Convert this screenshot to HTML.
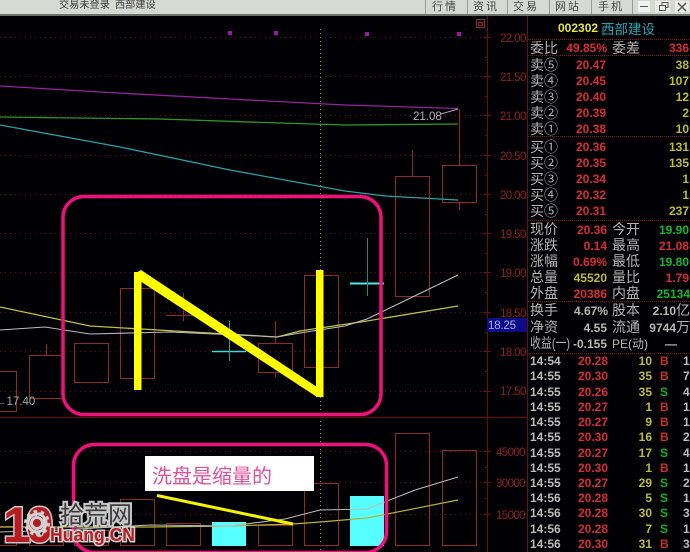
<!DOCTYPE html>
<html><head><meta charset="utf-8">
<style>
html,body{margin:0;padding:0;background:#000;width:690px;height:552px;overflow:hidden}
svg{display:block}
text{font-family:"Liberation Sans","Noto Sans CJK SC",sans-serif}
.ax{fill:#8c2226;font-size:11.5px;letter-spacing:-.6px}
.l{fill:#b4b4b4;font-size:14px;font-family:"Liberation Sans","WenQuanYi Zen Hei","Noto Sans CJK SC",sans-serif}
.r{fill:#d82c38;font-size:12px;font-weight:bold;text-anchor:end}
.y{fill:#bcbc38;font-size:12px;font-weight:bold;text-anchor:end}
.g{fill:#12b82c;font-size:12px;font-weight:bold;text-anchor:end}
.w{fill:#b8b8b8;font-size:12px;font-weight:bold;text-anchor:end}
.t{fill:#bcbcbc;font-size:12px;font-weight:bold}
.b{fill:#c83030;font-size:12px;font-weight:bold}
.s{fill:#12b02c;font-size:12px;font-weight:bold}
.m{fill:#444;font-size:11px;letter-spacing:2px}
.c rect,.c path{fill:none;stroke:#8e2a2c;stroke-width:1}
</style></head><body>
<svg width="690" height="552" viewBox="0 0 690 552" xmlns="http://www.w3.org/2000/svg">
<rect width="690" height="552" fill="#000004"/>
<!-- title bar -->
<rect width="690" height="15" fill="#d6d8d2"/>
<rect y="14" width="690" height="2" fill="#6e6e6a"/>
<text x="59" y="8" fill="#3c3c3c" font-size="10.200">交易未登录</text>
<text x="115" y="8" fill="#3c3c3c" font-size="10.200">西部建设</text>
<g stroke="#9a9a96"><path d="M425.500 0V14M467.500 0V14M507.500 0V14M549.500 0V14M591.500 0V14M632.500 0V14"/></g>
<text x="432" y="10" class="m">行情</text><text x="473" y="10" class="m">资讯</text><text x="513" y="10" class="m">交易</text><text x="555" y="10" class="m">网站</text><text x="598" y="10" class="m">手机</text>
<rect x="638" y="1" width="12" height="11" fill="#f0f0ee"/><path d="M640 6.500H648" stroke="#555"/>
<rect x="655" y="1" width="15" height="11" fill="#ecece8"/><path d="M659.500 5.500h6v5h-6zM662 5V2.500h6v5h-2" fill="none" stroke="#555"/>
<rect x="675" y="1" width="14" height="11" fill="#ecece8"/><path d="M678 3L686 11M686 3L678 11" stroke="#555" stroke-width="1.500"/>
<!-- grid -->
<g stroke="#6a0c0c" stroke-dasharray="1 4" fill="none">
<path d="M0 37.500H487M0 76.500H487M0 115.500H487M0 155.500H487M0 194.500H487M0 233.500H487M0 272.500H487M0 312.500H487M0 351.500H487M0 391.500H487M0 451.500H487M0 482.500H487M0 514.500H487"/>
</g>
<path d="M320.500 29V552" stroke="#8a8a60" stroke-dasharray="1 3"/>
<!-- axes -->
<g stroke="#6e0c10" fill="none">
<path d="M487.500 16V552M527.500 16V552M0 417.500H527"/>
<path d="M483 37.500h8M483 76.500h8M483 115.500h8M483 155.500h8M483 194.500h8M483 233.500h8M483 272.500h8M483 312.500h8M483 351.500h8M483 391.500h8M483 451.500h8M483 482.500h8M483 514.500h8"/>
<path d="M485 57.500h3M485 96.500h3M485 135.500h3M485 175.500h3M485 214.500h3M485 253.500h3M485 292.500h3M485 332.500h3M485 371.500h3M485 467.500h3M485 498.500h3"/>
<path d="M476.500 19.500h8v8h-8zM478.500 22.500h4v3h-4z" stroke="#8e2a2c"/>
</g>
<g>
<text x="500" y="42" class="ax">22.00</text><text x="500" y="81" class="ax">21.50</text><text x="500" y="120" class="ax">21.00</text><text x="500" y="160" class="ax">20.50</text><text x="500" y="199" class="ax">20.00</text><text x="500" y="238" class="ax">19.50</text><text x="500" y="277" class="ax">19.00</text><text x="500" y="317" class="ax">18.50</text><text x="500" y="356" class="ax">18.00</text><text x="500" y="395" class="ax">17.50</text>
<text x="496" y="456" class="ax">45000</text><text x="496" y="487" class="ax">30000</text><text x="496" y="519" class="ax">15000</text>
</g>
<rect x="487" y="318" width="40" height="14" fill="#0c0c88"/>
<text x="488" y="329" fill="#a8a8ee" font-size="11.500" letter-spacing="-.2">18.25</text>
<!-- candles -->
<g class="c">
<rect x="-2.500" y="371.500" width="19" height="40"/>
<rect x="29.500" y="355.500" width="34" height="43"/><path d="M46.500 344V355"/>
<rect x="74.500" y="343.500" width="34" height="39"/>
<rect x="120.500" y="288.500" width="34" height="90"/>
<path d="M166 315.500H194M183.500 293V321"/>
<rect x="258.500" y="343.500" width="34" height="29"/><path d="M275.500 321V343M275.500 372V377"/>
<rect x="304.500" y="275.500" width="34" height="92"/>
<rect x="395.500" y="176.500" width="34" height="120"/><path d="M412.500 150V176"/>
<rect x="442.500" y="165.500" width="34" height="37"/><path d="M459.500 109V165M459.500 202V210"/>
<!-- volume -->
<rect x="-2.500" y="526.500" width="19" height="19"/>
<rect x="29.500" y="528.500" width="34" height="17"/>
<rect x="74.500" y="530.500" width="34" height="15"/>
<rect x="120.500" y="499.500" width="34" height="46"/>
<rect x="166.500" y="523.500" width="34" height="22"/>
<rect x="258.500" y="525.500" width="34" height="20"/>
<rect x="304.500" y="483.500" width="34" height="62"/>
<rect x="395.500" y="433.500" width="34" height="112"/>
<rect x="442.500" y="450.500" width="34" height="95"/>
</g>
<path d="M212 351.500H246" stroke="#40d8d8" stroke-width="1.500"/><path d="M229.500 321V361" stroke="#2a9c9c"/>
<path d="M350 283.500H384" stroke="#50e8e8" stroke-width="2"/><path d="M367.500 238V296" stroke="#248a80"/>
<rect x="212" y="522" width="34" height="24" fill="#55ffff"/>
<rect x="350" y="496" width="34" height="50" fill="#55ffff"/>
<!-- MAs -->
<g fill="none">
<path d="M0 86L100 92L230 99L345 105L458 108.500" stroke="#98209c" stroke-width="1.300"/>
<path d="M0 117L160 119L280 123L345 125L458 124" stroke="#2c982c" stroke-width="1.300"/>
<path d="M0 125L120 147L230 170L345 191L385 196L458 200" stroke="#2aa0a8" stroke-width="1.300"/>
<path d="M0 307L90 326L175 331L260 336L277 337L300 331L367 321L458 306" stroke="#c0c040" stroke-width="1.300"/>
<path d="M0 330L45 327L90 334L170 332L260 336L277 337L300 333L345 326L367 319L458 275" stroke="#bcbcbc" stroke-width="1.100"/>
<path d="M0 527H150L230 526L293 524L320 522L367 518L458 500" stroke="#b4b430" stroke-width="1.200"/>
<path d="M0 532L60 530L150 525L230 526L285 519L320 510L367 509L415 490L458 477" stroke="#bcbcbc" stroke-width="1.100"/>
<path d="M441 114L458 109" stroke="#a8a8a8"/>
</g>
<text x="413" y="120" fill="#b4b4b4" font-size="11.500">21.08</text>
<text x="-5" y="405" fill="#a8a8a8" font-size="11.500">←17.40</text>
<!-- markers -->
<g fill="#a014a8"><rect x="228" y="31" width="4" height="4"/><rect x="274" y="31" width="4" height="4"/><rect x="365" y="32" width="4" height="4"/><rect x="457" y="32" width="4" height="4"/></g>
<!-- overlays -->
<rect x="63" y="196.500" width="318" height="218" rx="21" fill="none" stroke="#f0107c" stroke-width="3.500"/>
<rect x="73.500" y="444.500" width="313" height="108" rx="21" fill="none" stroke="#f0107c" stroke-width="3.500"/>
<g fill="#ffff00">
<rect x="134" y="272" width="7.500" height="118"/>
<path d="M134 274L141 270L323 391V397H317L137 279Z"/>
<rect x="316" y="270" width="7.500" height="127"/>
</g>
<rect x="145" y="456" width="169" height="35" fill="#fff"/>
<text x="152" y="483" fill="#e0509c" font-size="20" font-family="'WenQuanYi Zen Hei','Noto Sans CJK SC',sans-serif">洗盘是缩量的</text>
<path d="M157 495.500L293 524" stroke="#f4f400" stroke-width="3"/>
<!-- logo -->
<g>
<text x="3" y="542" font-size="50" font-weight="bold" fill="#b81c20" stroke="#c8c8c8" stroke-width="3" paint-order="stroke" font-family="'Liberation Sans',sans-serif" letter-spacing="-5">10</text>
<circle cx="37" cy="523" r="9" fill="none" stroke="#d8d0d0" stroke-width="3"/>
<circle cx="37" cy="523" r="11.500" fill="none" stroke="#d8d0d0" stroke-width="3" stroke-dasharray="3.500 3.700"/>
<circle cx="37" cy="523" r="7" fill="#d8d0d0"/>
<circle cx="37" cy="523" r="4" fill="#b01c20"/>
<text x="60" y="523" font-size="24" fill="#3c3c3c" stroke="#c8c8c8" stroke-width="4" paint-order="stroke" font-family="'Noto Sans CJK SC',sans-serif">拾荒网</text>
<text x="50" y="541" font-size="18" font-weight="bold" fill="#b81c20" stroke="#d0d0d0" stroke-width="3" paint-order="stroke" font-family="'Liberation Serif',serif" textLength="85" lengthAdjust="spacingAndGlyphs">Huang.CN</text>
</g>
<!-- quote panel -->
<text x="558" y="32" fill="#e8e838" font-size="12" font-weight="bold">002302</text>
<text x="601" y="34" fill="#20a8b0" font-size="13.500" font-family="'WenQuanYi Zen Hei','Noto Sans CJK SC',sans-serif">西部建设</text>
<g stroke="#8a1414" stroke-dasharray="1 1"><path d="M528 39.500H690M528 55.500H690M528 136.500H690M528 220.500H690M528 301.500H690M528 353.500H690"/></g>
<text x="530" y="53" class="l">委比</text><text x="612" y="53" class="l">委差</text>
<text x="607" y="52" class="r">49.85%</text><text x="689" y="52" class="r">336</text>
<text x="530" y="70" class="l">卖⑤</text><text x="606" y="69" class="r">20.47</text><text x="689" y="69" class="y">38</text>
<text x="530" y="86" class="l">卖④</text><text x="606" y="85" class="r">20.45</text><text x="689" y="85" class="y">107</text>
<text x="530" y="102" class="l">卖③</text><text x="606" y="101" class="r">20.40</text><text x="689" y="101" class="y">12</text>
<text x="530" y="118" class="l">卖②</text><text x="606" y="117" class="r">20.39</text><text x="689" y="117" class="y">2</text>
<text x="530" y="134" class="l">卖①</text><text x="606" y="133" class="r">20.38</text><text x="689" y="133" class="y">10</text>
<text x="530" y="152" class="l">买①</text><text x="606" y="151" class="r">20.36</text><text x="689" y="151" class="y">131</text>
<text x="530" y="168" class="l">买②</text><text x="606" y="167" class="r">20.35</text><text x="689" y="167" class="y">135</text>
<text x="530" y="184" class="l">买③</text><text x="606" y="183" class="r">20.34</text><text x="689" y="183" class="y">1</text>
<text x="530" y="200" class="l">买④</text><text x="606" y="199" class="r">20.32</text><text x="689" y="199" class="y">1</text>
<text x="530" y="216" class="l">买⑤</text><text x="606" y="215" class="r">20.31</text><text x="689" y="215" class="y">237</text>
<text x="530" y="234" class="l">现价</text><text x="607" y="234" class="r">20.36</text><text x="612" y="234" class="l">今开</text><text x="689" y="234" class="g">19.90</text>
<text x="530" y="250" class="l">涨跌</text><text x="607" y="250" class="r">0.14</text><text x="612" y="250" class="l">最高</text><text x="689" y="250" class="r">21.08</text>
<text x="530" y="266" class="l">涨幅</text><text x="607" y="266" class="r">0.69%</text><text x="612" y="266" class="l">最低</text><text x="689" y="266" class="g">19.80</text>
<text x="530" y="282" class="l">总量</text><text x="607" y="282" class="y">45520</text><text x="612" y="282" class="l">量比</text><text x="689" y="282" class="r">1.79</text>
<text x="530" y="298" class="l">外盘</text><text x="607" y="298" class="r">20386</text><text x="612" y="298" class="l">内盘</text><text x="690" y="298" class="g">25134</text>
<text x="530" y="315" class="l">换手</text><text x="608" y="315" class="w">4.67%</text><text x="612" y="315" class="l">股本</text><text x="676" y="315" class="w">2.10</text><text x="676" y="315" class="l">亿</text>
<text x="530" y="332" class="l">净资</text><text x="607" y="332" class="w">4.55</text><text x="612" y="332" class="l">流通</text><text x="676" y="332" class="w">9744</text><text x="676" y="332" class="l">万</text>
<text x="530" y="348" class="l" textLength="40" lengthAdjust="spacingAndGlyphs">收益(一)</text><text x="607" y="348" class="w">-0.155</text><text x="612" y="348" class="w" style="text-anchor:start;font-weight:normal">PE(动)</text><text x="677" y="348" class="w">—</text>
<!-- trades -->
<g>
<text x="530" y="365" class="t">14:54</text><text x="608" y="365" class="r">20.28</text><text x="652" y="365" class="y">10</text><text x="660" y="365" class="b">B</text><text x="683" y="365" class="t">1</text>
<text x="530" y="380" class="t">14:55</text><text x="608" y="380" class="r">20.30</text><text x="652" y="380" class="y">35</text><text x="660" y="380" class="b">B</text><text x="683" y="380" class="t">7</text>
<text x="530" y="396" class="t">14:55</text><text x="608" y="396" class="r">20.26</text><text x="652" y="396" class="y">35</text><text x="660" y="396" class="s">S</text><text x="683" y="396" class="t">4</text>
<text x="530" y="411" class="t">14:55</text><text x="608" y="411" class="r">20.27</text><text x="652" y="411" class="y">1</text><text x="660" y="411" class="b">B</text><text x="683" y="411" class="t">1</text>
<text x="530" y="426" class="t">14:55</text><text x="608" y="426" class="r">20.27</text><text x="652" y="426" class="y">9</text><text x="660" y="426" class="b">B</text><text x="683" y="426" class="t">1</text>
<text x="530" y="441" class="t">14:55</text><text x="608" y="441" class="r">20.30</text><text x="652" y="441" class="y">16</text><text x="660" y="441" class="b">B</text><text x="683" y="441" class="t">2</text>
<text x="530" y="457" class="t">14:55</text><text x="608" y="457" class="r">20.27</text><text x="652" y="457" class="y">17</text><text x="660" y="457" class="s">S</text><text x="683" y="457" class="t">4</text>
<text x="530" y="472" class="t">14:55</text><text x="608" y="472" class="r">20.30</text><text x="652" y="472" class="y">1</text><text x="660" y="472" class="b">B</text><text x="683" y="472" class="t">1</text>
<text x="530" y="487" class="t">14:55</text><text x="608" y="487" class="r">20.27</text><text x="652" y="487" class="y">29</text><text x="660" y="487" class="s">S</text><text x="683" y="487" class="t">2</text>
<text x="530" y="502" class="t">14:56</text><text x="608" y="502" class="r">20.28</text><text x="652" y="502" class="y">5</text><text x="660" y="502" class="s">S</text><text x="683" y="502" class="t">1</text>
<text x="530" y="517" class="t">14:56</text><text x="608" y="517" class="r">20.28</text><text x="652" y="517" class="y">30</text><text x="660" y="517" class="s">S</text><text x="683" y="517" class="t">3</text>
<text x="530" y="533" class="t">14:56</text><text x="608" y="533" class="r">20.28</text><text x="652" y="533" class="y">7</text><text x="660" y="533" class="s">S</text><text x="683" y="533" class="t">1</text>
<text x="530" y="548" class="t">14:56</text><text x="608" y="548" class="r">20.30</text><text x="652" y="548" class="y">31</text><text x="660" y="548" class="b">B</text><text x="683" y="548" class="t">3</text>
</g>
</svg>
</body></html>
